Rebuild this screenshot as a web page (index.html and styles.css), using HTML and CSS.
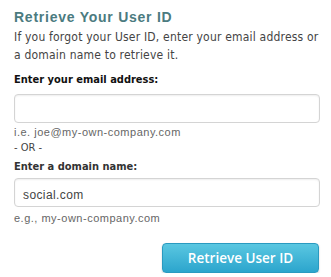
FILE: index.html
```html
<!DOCTYPE html>
<html>
<head>
<meta charset="utf-8">
<link rel="stylesheet" href="styles.css">
</head>
<body>
<div class="page">
  <h1 class="title">Retrieve Your User ID</h1>
  <p class="intro">If you forgot your User ID, enter your email address or a domain name to retrieve it.</p>
  <label class="label">Enter your email address:</label>
  <div class="field"></div>
  <div class="hint">i.e. joe@my-own-company.com</div>
  <div class="or">- OR -</div>
  <label class="label label2">Enter a domain name:</label>
  <div class="field field2"><span class="value">social.com</span></div>
  <div class="hint hint2">e.g., my-own-company.com</div>
  <div class="actions"><button class="btn">Retrieve User ID</button></div>
</div>
</body>
</html>
```
FILE: styles.css
```css
html, body { margin: 0; padding: 0; background: #fff; }
.page {
  width: 331px;
  padding: 7px 12px 0 14px;
  box-sizing: border-box;
  font-family: "DejaVu Sans Condensed", "DejaVu Sans", sans-serif;
}
.title {
  margin: 0;
  font-family: "Liberation Sans", Arial, sans-serif;
  font-size: 14px;
  font-weight: bold;
  letter-spacing: 0.75px;
  color: #4b7b80;
  line-height: 21px;
}
.intro {
  margin: 0;
  font-size: 12px;
  line-height: 18px;
  color: #444;
  letter-spacing: 0.2px;
}
.label {
  display: block;
  margin-top: 8px;
  font-size: 11px;
  font-weight: bold;
  color: #111;
  line-height: 16px;
}
.label2 { margin-top: 3px; color: #333; }
.field {
  margin-top: 6px;
  height: 27px;
  width: 288px;
  border: 1px solid #d4d4d4;
  border-radius: 4px;
  box-shadow: inset 0 1px 2px rgba(0,0,0,0.07);
  display: flex;
  align-items: center;
  padding: 0 8px;
  box-sizing: content-box;
}
.field2 { margin-top: 3px; }
.value {
  font-family: "Liberation Sans", Arial, sans-serif;
  font-size: 12px;
  color: #444;
  letter-spacing: 0.4px;
  margin-top: 4px;
}
.hint {
  margin-top: 1px;
  font-family: "Liberation Sans", Arial, sans-serif;
  font-size: 11px;
  color: #666;
  letter-spacing: 0.5px;
  line-height: 16px;
}
.hint2 { margin-top: 3px; }
.or {
  font-size: 11px;
  color: #444;
  line-height: 16px;
}
.actions {
  display: flex;
  justify-content: flex-end;
  margin-top: 17px;
}
.btn {
  width: 157px;
  height: 30px;
  border: 1px solid #2a9ac0;
  border-radius: 4px;
  background: linear-gradient(#5ac7e1, #2ca5cd);
  color: #fff;
  font-family: "Open Sans", sans-serif;
  font-size: 13.5px;
  font-weight: 600;
  box-shadow: 0 1px 2px rgba(0,0,0,0.2);
  padding: 0;
}
```
